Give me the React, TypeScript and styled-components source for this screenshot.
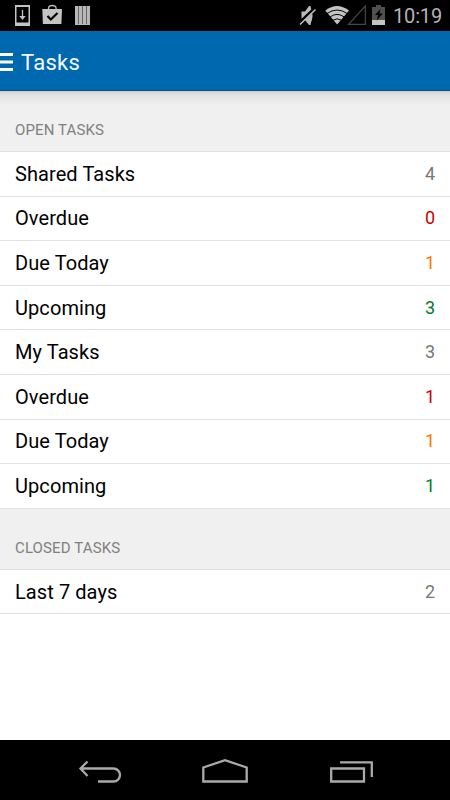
import React from "react";
import styled, { createGlobalStyle } from "styled-components";

const GlobalStyle = createGlobalStyle`
  body { margin: 0; background: #fff; }
  * { box-sizing: border-box; }
`;

const Screen = styled.div`
  width: 450px;
  height: 800px;
  display: flex;
  flex-direction: column;
  overflow: hidden;
  background: #fff;
  font-family: Roboto, sans-serif;
`;

const StatusBar = styled.header`
  flex: none;
  height: 31px;
  display: flex;
  justify-content: space-between;
  background: #000;
`;

const StatusGroup = styled.div`
  display: flex;
  align-items: center;
`;

const Clock = styled.time`
  width: 58px;
  padding-left: 1px;
  font-size: 20px;
  line-height: 31px;
  font-weight: 400;
  letter-spacing: -0.15px;
  padding-top: 2px;
  color: #b4b4b4;
`;

const AppBar = styled.div`
  flex: none;
  height: 60px;
  display: flex;
  align-items: center;
  gap: 8px;
  background: #0068ae;
  border-bottom: 1px solid #00508c;
`;

const Title = styled.h1`
  margin: 0;
  padding-top: 4px;
  font-size: 22px;
  line-height: 28px;
  font-weight: 400;
  letter-spacing: 0.25px;
  color: #f4f8fc;
`;

const Content = styled.main`
  flex: 1;
  min-height: 0;
`;

const SectionHeader = styled.h2<{ $shadow?: boolean }>`
  margin: 0;
  height: 61px;
  padding: 30px 15px 0;
  font-size: 15px;
  line-height: 19px;
  font-weight: 400;
  letter-spacing: 0.12px;
  color: #808080;
  background: ${(p) => (p.$shadow ? "linear-gradient(#cfcfcf, #e2e2e2 4px, #f0f0f0 14px)" : "#f0f0f0")};
  border-bottom: 1px solid #e2e2e2;
`;

const TaskList = styled.ul`
  margin: 0;
  padding: 0;
  list-style: none;
`;

const TaskRow = styled.li`
  height: 44.6px;
  padding: 0 15px;
  display: flex;
  align-items: center;
  justify-content: space-between;
  border-bottom: 1px solid #e2e2e2;
`;

const TaskName = styled.span`
  font-size: 20px;
  line-height: 24px;
  letter-spacing: 0.08px;
  color: #000;
`;

const Count = styled.span<{ $color: string }>`
  font-size: 18px;
  line-height: 24px;
  color: ${(p) => p.$color};
`;

const NavBar = styled.nav`
  flex: none;
  height: 60px;
  background: #000;
  display: flex;
  justify-content: center;
`;

const NavButton = styled.button`
  width: 126px;
  height: 60px;
  padding: 0;
  border: 0;
  background: none;
  display: flex;
`;

const Icon = styled.svg`
  display: block;
  flex: none;
`;

const GREY = "#777777";
const RED = "#cc0000";
const ORANGE = "#ff7700";
const GREEN = "#00802b";

type Task = { name: string; count: number; color: string };

const openTasks: Task[] = [
  { name: "Shared Tasks", count: 4, color: GREY },
  { name: "Overdue", count: 0, color: RED },
  { name: "Due Today", count: 1, color: ORANGE },
  { name: "Upcoming", count: 3, color: GREEN },
  { name: "My Tasks", count: 3, color: GREY },
  { name: "Overdue", count: 1, color: RED },
  { name: "Due Today", count: 1, color: ORANGE },
  { name: "Upcoming", count: 1, color: GREEN },
];

const closedTasks: Task[] = [{ name: "Last 7 days", count: 2, color: GREY }];

function Tasks({ items }: { items: Task[] }) {
  return (
    <TaskList>
      {items.map((t, i) => (
        <TaskRow key={i}>
          <TaskName>{t.name}</TaskName>
          <Count $color={t.color}>{t.count}</Count>
        </TaskRow>
      ))}
    </TaskList>
  );
}

function Notifications() {
  return (
    <Icon width="100" height="31" viewBox="0 0 100 31">
      <path fill="#c4c4c4" fillRule="evenodd" d="M15 5h15v21H15zM16.500 7v15.500h12V7z" />
      <path d="M22.500 10v8" fill="none" stroke="#c4c4c4" strokeWidth="1.300" />
      <path d="M19.300 16h6.400l-3.200 4z" fill="#c4c4c4" />
      <path d="M48.500 10V8.500a3.800 3 0 0 1 7.600 0V10" fill="none" stroke="#bdbdbd" strokeWidth="1.300" />
      <path d="M42.300 9h19.700l-.6 15H42.900z" fill="#c4c4c4" />
      <path d="M47.500 16l3.300 3.500 6.700-6.500" fill="none" stroke="#000" strokeWidth="2.200" />
      <path d="M75 6h15v19h-15z" fill="#b8b8b8" />
      <path d="M78.500 6v18M82.500 6v18M86.500 6v18" stroke="#666" strokeWidth="1" />
    </Icon>
  );
}

function SystemStatus() {
  return (
    <Icon width="94" height="31" viewBox="298 0 94 31">
      <path d="M301.500 11.500h3.500L309 6h1.500v19H309l-4-5h-3.500z" fill="#bbb" />
      <path d="M310 6Q315 15.500 310 25" fill="#bbb" />
      <path d="M299 23.500L315 8.500" stroke="#000" strokeWidth="3.600" />
      <path d="M300 24.500L315.500 9.500" stroke="#c4c4c4" strokeWidth="1.500" />
      <path d="M325.300 10.500Q337 1.500 349 10.500L337.200 24.500z" fill="#c4c4c4" />
      <path d="M327 13.500Q337 6.500 347.200 13.500M330 17Q337 11.800 344.300 17M333 20.300Q337 17.300 341.500 20.300" fill="none" stroke="#000" strokeWidth="1" />
      <path d="M348.500 24.300H365.300V6z" fill="none" stroke="#484848" strokeWidth="1.200" />
      <path d="M376 5h5v2h4v13h-13V7h4z" fill="#505050" />
      <path d="M372 20h13v5h-13z" fill="#c4c4c4" />
      <path d="M380.500 9l-5.500 6h3l-1.200 5.500 6-7h-3.300z" fill="#000" />
    </Icon>
  );
}

export default function App() {
  return (
    <Screen>
      <GlobalStyle />
      <StatusBar>
        <StatusGroup><Notifications /></StatusGroup>
        <StatusGroup>
          <SystemStatus />
          <Clock>10:19</Clock>
        </StatusGroup>
      </StatusBar>
      <AppBar>
        <Icon width="13" height="20" viewBox="0 0 13 20">
          <path d="M0 2h13v3H0zM0 9.500h13v3H0zM0 17h13v3H0z" fill="#fff" />
        </Icon>
        <Title>Tasks</Title>
      </AppBar>
      <Content>
        <SectionHeader $shadow>OPEN TASKS</SectionHeader>
        <Tasks items={openTasks} />
        <SectionHeader>CLOSED TASKS</SectionHeader>
        <Tasks items={closedTasks} />
      </Content>
      <NavBar>
        <NavButton aria-label="Back">
          <Icon width="126" height="60" viewBox="36 740 126 60" fill="none" stroke="#aaa" strokeWidth="2.300">
            <path d="M87.500 761.500L80.500 768.500L87.500 776M80.500 768.500H113.500A6.500 6.500 0 0 1 113.500 781.500H98" />
          </Icon>
        </NavButton>
        <NavButton aria-label="Home">
          <Icon width="126" height="60" viewBox="162 740 126 60" fill="none" stroke="#aaa" strokeWidth="2.300">
            <path d="M203.300 781.500V767.500L225 760.200L246.700 767.500V781.500z" />
          </Icon>
        </NavButton>
        <NavButton aria-label="Recent apps">
          <Icon width="126" height="60" viewBox="288 740 126 60" fill="none" stroke="#aaa" strokeWidth="2.300">
            <path d="M331.200 768.500H364V781.500H331.200zM340 762.300H371.800V777" />
          </Icon>
        </NavButton>
      </NavBar>
    </Screen>
  );
}
